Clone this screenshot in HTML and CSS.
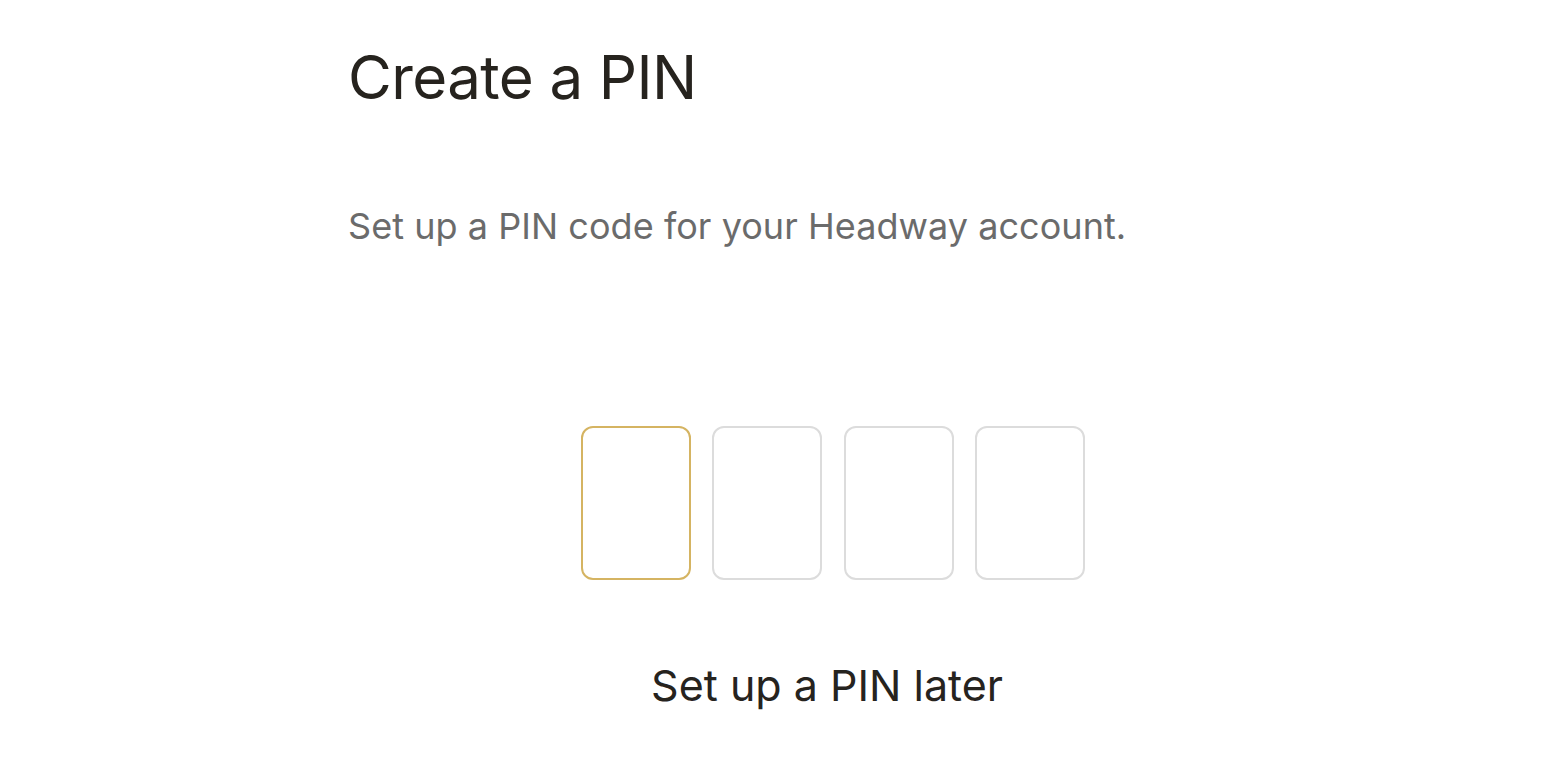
FILE: index.html
```html
<!DOCTYPE html>
<html>
<head>
<meta charset="utf-8">
<link rel="stylesheet" href="styles.css">
</head>
<body>
<main class="page">
  <h1 class="title">Create a PIN</h1>
  <p class="subtitle">Set up a PIN code for your Headway account.</p>
  <div class="pin-row">
    <div class="pin-box active"></div>
    <div class="pin-box"></div>
    <div class="pin-box"></div>
    <div class="pin-box"></div>
  </div>
  <div class="later-row">
    <button class="later">Set up a PIN later</button>
  </div>
</main>
</body>
</html>
```

FILE: styles.css
```css
html, body {
  margin: 0;
  padding: 0;
  background: #ffffff;
}
body {
  font-family: Inter, "Liberation Sans", sans-serif;
  color: #26231e;
}
.page {
  width: 970px;
  margin-left: 348px;
  padding-top: 41px;
}
.title {
  margin: 0;
  font-size: 60px;
  font-weight: 400;
  line-height: 72px;
  letter-spacing: -0.6px;
  color: #26231e;
}
.subtitle {
  margin: 89px 0 0 0;
  font-size: 36px;
  font-weight: 400;
  line-height: 48px;
  letter-spacing: 0.05px;
  color: #6b6b6b;
}
.pin-row {
  margin-top: 176px;
  display: flex;
  justify-content: center;
  gap: 21.5px;
}
.pin-box {
  width: 106px;
  height: 150px;
  border: 2px solid #dcdcdc;
  border-radius: 12px;
}
.pin-box.active {
  border-color: #d5b462;
}
.later-row {
  margin-top: 77px;
  display: flex;
  justify-content: center;
}
.later {
  background: none;
  border: none;
  padding: 0;
  font-family: Inter, "Liberation Sans", sans-serif;
  font-size: 43px;
  line-height: 56px;
  color: #26231e;
  margin-right: 12px;
}
```
